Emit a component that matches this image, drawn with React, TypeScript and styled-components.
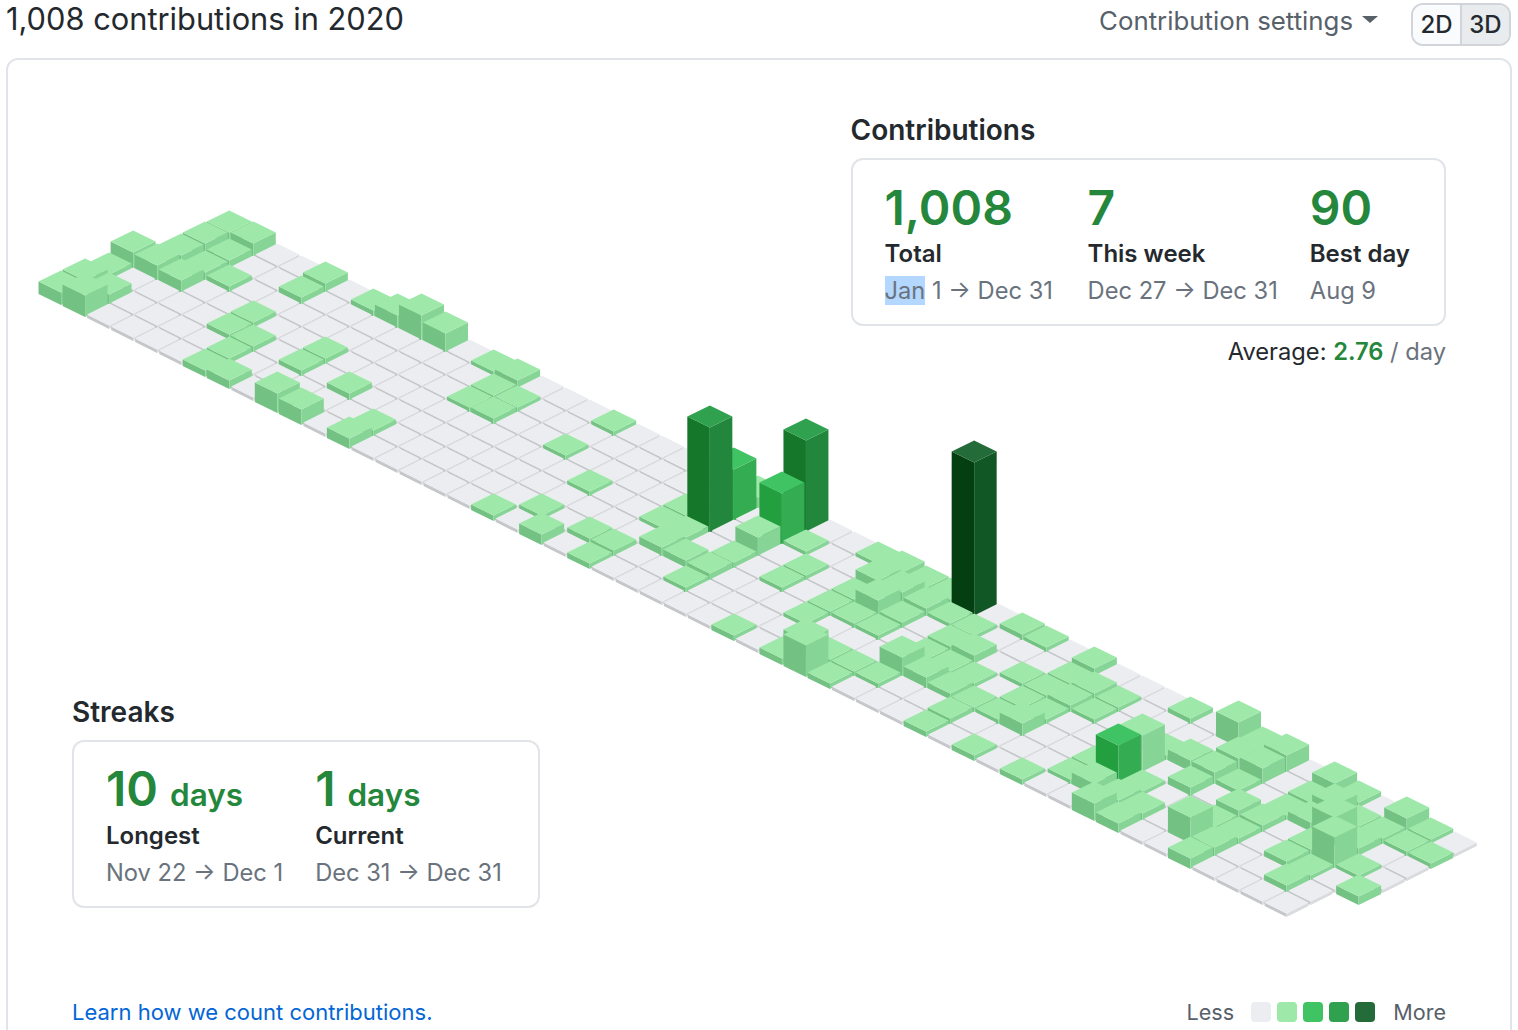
import React from 'react'
import styled, { createGlobalStyle } from 'styled-components'

const GlobalStyle = createGlobalStyle`
  html, body {
    margin: 0;
    height: 1030px;
    overflow: hidden;
    background: #fff;
    font-family: Inter, "Liberation Sans", sans-serif;
    color: #24292e;
  }
`

const Page = styled.div`
  width: 1518px;
  height: 1030px;
  overflow: hidden;
  box-sizing: border-box;
  padding: 0 6px;
`
const Header = styled.div`
  display: flex;
  align-items: flex-start;
  justify-content: space-between;
  height: 58px;
  margin-right: 1px;
`
const Title = styled.h2`
  margin: -1px 0 0;
  font-size: 30.8px;
  line-height: 40px;
  font-weight: 400;
`
const HeaderActions = styled.div`
  display: flex;
  align-items: flex-start;
`
const SettingsLink = styled.div`
  display: flex;
  align-items: center;
  gap: 9px;
  font-size: 25.8px;
  line-height: 34px;
  color: #586069;
  margin: 4px 33px 0 0;
`
const Caret = styled.span`
  width: 0;
  height: 0;
  margin-top: -3px;
  border-top: 7px solid #586069;
  border-left: 8px solid transparent;
  border-right: 8px solid transparent;
`
const ButtonGroup = styled.div`
  display: flex;
  height: 43px;
  margin-top: 3px;
  border: 2px solid #d1d5da;
  border-radius: 12px;
  overflow: hidden;
  box-sizing: border-box;
`
const ModeButton = styled.div<{ $active?: boolean }>`
  width: 47px;
  display: flex;
  align-items: center;
  justify-content: center;
  font-size: 24px;
  font-weight: 500;
  background: ${({ $active }) => ($active ? '#e9ecef' : '#fafbfc')};
  & + & {
    border-left: 2px solid #d1d5da;
  }
`
const Panel = styled.div`
  position: relative;
  border: 2px solid #e1e4e8;
  border-radius: 12px;
  width: 1506px;
  height: 1100px;
  box-sizing: border-box;
`
const Chart = styled.svg`
  display: block;
  width: 1502px;
  height: 930px;
`
const Overlay = styled.div`
  position: absolute;
`
const ContributionsOverlay = styled(Overlay)`
  top: 51px;
  right: 64px;
`
const StreaksOverlay = styled(Overlay)`
  top: 633px;
  left: 64px;
`
const SectionTitle = styled.h4`
  margin: 0 0 9px;
  font-size: 28px;
  line-height: 38px;
  font-weight: 600;
`
const StatBox = styled.div`
  display: flex;
  gap: 32px;
  border: 2px solid #e1e4e8;
  border-radius: 12px;
  padding: 20px 34px 15px 32px;
  background: #fff;
`
const Stat = styled.div<{ $minWidth?: number }>`
  display: flex;
  flex-direction: column;
  min-width: ${({ $minWidth }) => $minWidth || 0}px;
`
const StatValue = styled.div`
  font-size: 48px;
  line-height: 56px;
  height: 56px;
  font-weight: 600;
  color: #24873c;
  white-space: nowrap;
`
const StreakValue = styled(StatValue)`
  margin: -1px 0 1px;
`
const StatUnit = styled.span`
  font-size: 31.5px;
  line-height: 1;
  margin-left: 12px;
`
const StatLabel = styled.div`
  font-size: 24px;
  line-height: 36px;
  font-weight: 600;
`
const StatRange = styled.div`
  font-size: 23.7px;
  line-height: 36px;
  margin-top: 1px;
  color: #6a737d;
  white-space: nowrap;
`
const Selected = styled.span`
  background: #b3d7ff;
`
const Average = styled.div`
  margin-top: 8px;
  text-align: right;
  font-size: 23.7px;
  line-height: 36px;
`
const AverageValue = styled.span`
  color: #24873c;
  font-weight: 600;
`
const Muted = styled.span`
  color: #6a737d;
`
const Footer = styled.div`
  display: flex;
  align-items: center;
  justify-content: space-between;
  padding: 0 64px;
  height: 44px;
`
const LearnLink = styled.a`
  font-size: 22px;
  color: #0366d6;
  text-decoration: none;
`
const Legend = styled.div`
  display: flex;
  align-items: center;
  gap: 6px;
  font-size: 21.6px;
  color: #586069;
`
const LegendLabel = styled.span<{ $side: 'left' | 'right' }>`
  ${({ $side }) => ($side === 'left' ? 'margin-right: 11px;' : 'margin-left: 12px;')}
`
const Swatch = styled.span<{ $color: string }>`
  width: 20px;
  height: 20px;
  border-radius: 4px;
  background: ${({ $color }) => $color};
`

// top, left, right face colours per contribution level
const PALETTE = [
  ['#ebedf0', '#c6c7cb', '#dadbde'],
  ['#9ee8a9', '#74c283', '#87d497'],
  ['#40c463', '#239f40', '#34ad52'],
  ['#30a14e', '#14772a', '#22863d'],
  ['#246b3a', '#033f10', '#115726'],
]

// week -> [day, height, level?]
const CUBES: Record<number, number[][]> = {
  0: [[3, 16], [4, 6], [5, 12], [6, 12]],
  1: [[0, 12], [1, 13], [2, 13], [3, 15], [5, 10], [6, 21]],
  2: [[0, 13], [1, 8], [2, 8], [3, 12]],
  3: [[2, 6]],
  5: [[0, 9], [1, 7], [3, 6], [4, 6]],
  6: [[4, 6], [5, 6], [6, 6]],
  7: [[0, 6], [6, 8]],
  8: [[0, 13], [3, 6], [4, 6]],
  9: [[0, 25], [6, 19]],
  10: [[0, 19], [4, 7], [6, 15]],
  12: [[0, 5], [5, 6], [6, 10]],
  13: [[0, 8], [1, 5], [2, 5]],
  14: [[1, 5], [2, 6]],
  17: [[0, 5], [2, 5]],
  18: [[6, 5]],
  19: [[3, 5], [5, 5]],
  20: [[6, 10]],
  21: [[5, 6]],
  22: [[2, 5], [3, 5], [5, 6], [6, 5]],
  23: [[0, 11], [1, 51, 2], [2, 105, 3], [3, 7], [4, 9]],
  24: [[4, 8]],
  25: [[0, 92, 3], [1, 51, 2], [2, 19], [3, 6], [4, 7], [5, 5]],
  26: [[1, 5]],
  27: [[2, 5], [3, 5]],
  28: [[0, 5], [6, 5]],
  29: [[0, 8], [1, 12], [2, 5], [3, 5], [4, 5]],
  30: [[0, 5], [1, 12], [2, 16], [3, 5], [5, 12], [6, 6]],
  31: [[0, 5], [1, 8], [2, 6], [3, 5], [5, 5], [6, 31]],
  32: [[0, 154, 4], [1, 5], [5, 5], [6, 5]],
  33: [[1, 5], [2, 6], [3, 5], [4, 19], [5, 5]],
  34: [[0, 6], [2, 9], [3, 5], [4, 11]],
  35: [[0, 5], [3, 5], [4, 7]],
  36: [[2, 5], [4, 5], [5, 6], [6, 5]],
  37: [[0, 8], [1, 5], [2, 5], [3, 5], [4, 5]],
  38: [[1, 7], [2, 7], [3, 5], [4, 13], [6, 5]],
  39: [[1, 5], [2, 5]],
  40: [[6, 5]],
  41: [[0, 6], [4, 5], [5, 5]],
  42: [[2, 5], [3, 37], [4, 39, 2], [5, 13]],
  43: [[0, 26], [2, 12], [4, 5], [5, 8], [6, 17]],
  44: [[0, 12], [1, 14], [2, 12], [3, 9], [5, 7], [6, 9]],
  45: [[0, 17], [1, 16], [2, 6]],
  46: [[3, 10], [4, 6], [5, 27]],
  47: [[0, 13], [1, 6], [2, 5], [3, 7], [4, 6], [5, 9], [6, 10]],
  48: [[0, 6], [1, 15], [2, 10]],
  49: [[1, 6], [2, 27], [3, 7], [4, 7]],
  50: [[0, 14], [1, 6], [2, 8], [3, 31], [4, 5], [5, 7]],
  51: [[0, 5], [1, 5], [3, 5]],
  52: [[1, 5], [4, 8]],
}

function Cube({ week, day, height, level }: { week: number; day: number; height: number; level: number }) {
  // empty tiles are drawn a bit smaller so the grid lines show
  const a = level === 0 ? 22 : 22.5
  const b = level === 0 ? 10.9 : 11
  const x = 205.2 + 24.03 * (week - day)
  const g = 222 + 12 * (week + day)
  const t = g - height
  const [top, left, right] = PALETTE[level]
  return (
    <g>
      <polygon fill={left} points={`${x - a},${t} ${x},${t + b} ${x},${g + b} ${x - a},${g}`} />
      <polygon fill={right} points={`${x + a},${t} ${x},${t + b} ${x},${g + b} ${x + a},${g}`} />
      <polygon fill={top} points={`${x},${t - b} ${x + a},${t} ${x},${t + b} ${x - a},${t}`} />
    </g>
  )
}

function IsometricChart() {
  const cells: React.ReactNode[] = []
  for (let week = 0; week <= 52; week++) {
    const first = week === 0 ? 3 : 0
    const last = week === 52 ? 4 : 6
    for (let day = first; day <= last; day++) {
      const hit = (CUBES[week] || []).find((c) => c[0] === day)
      cells.push(
        <Cube
          key={`${week}-${day}`}
          week={week}
          day={day}
          height={hit ? hit[1] + 0.6 : 3.5}
          level={hit ? hit[2] || 1 : 0}
        />,
      )
    }
  }
  return <Chart viewBox="8 60 1502 930">{cells}</Chart>
}

export default function App() {
  return (
    <Page>
      <GlobalStyle />
      <Header>
        <Title>1,008 contributions in 2020</Title>
        <HeaderActions>
          <SettingsLink>
            Contribution settings <Caret />
          </SettingsLink>
          <ButtonGroup>
            <ModeButton>2D</ModeButton>
            <ModeButton $active>3D</ModeButton>
          </ButtonGroup>
        </HeaderActions>
      </Header>
      <Panel>
        <IsometricChart />
        <ContributionsOverlay>
          <SectionTitle>Contributions</SectionTitle>
          <StatBox>
            <Stat $minWidth={171}>
              <StatValue>1,008</StatValue>
              <StatLabel>Total</StatLabel>
              <StatRange>
                <Selected>Jan</Selected> 1 → Dec 31
              </StatRange>
            </Stat>
            <Stat>
              <StatValue>7</StatValue>
              <StatLabel>This week</StatLabel>
              <StatRange>Dec 27 → Dec 31</StatRange>
            </Stat>
            <Stat>
              <StatValue>90</StatValue>
              <StatLabel>Best day</StatLabel>
              <StatRange>Aug 9</StatRange>
            </Stat>
          </StatBox>
          <Average>
            Average: <AverageValue>2.76</AverageValue> <Muted>/ day</Muted>
          </Average>
        </ContributionsOverlay>
        <StreaksOverlay>
          <SectionTitle>Streaks</SectionTitle>
          <StatBox>
            <Stat>
              <StreakValue>
                10<StatUnit>days</StatUnit>
              </StreakValue>
              <StatLabel>Longest</StatLabel>
              <StatRange>Nov 22 → Dec 1</StatRange>
            </Stat>
            <Stat $minWidth={189}>
              <StreakValue>
                1<StatUnit>days</StatUnit>
              </StreakValue>
              <StatLabel>Current</StatLabel>
              <StatRange>Dec 31 → Dec 31</StatRange>
            </Stat>
          </StatBox>
        </StreaksOverlay>
        <Footer>
          <LearnLink href="#">Learn how we count contributions.</LearnLink>
          <Legend>
            <LegendLabel $side="left">Less</LegendLabel>
            {PALETTE.map((p) => (
              <Swatch key={p[0]} $color={p[0]} />
            ))}
            <LegendLabel $side="right">More</LegendLabel>
          </Legend>
        </Footer>
      </Panel>
    </Page>
  )
}
